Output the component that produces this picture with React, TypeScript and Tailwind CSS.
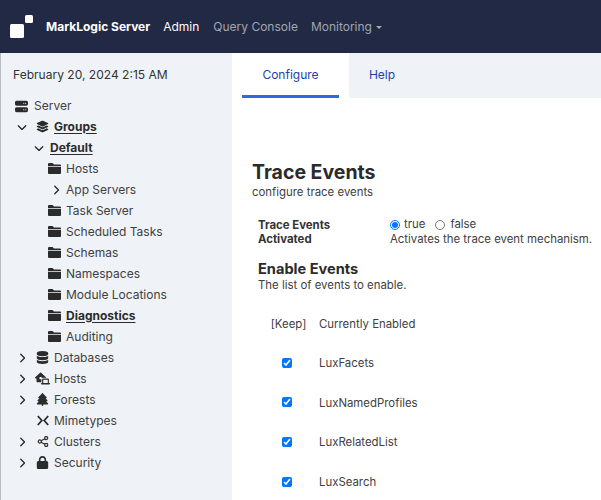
import { ReactNode } from "react";
import {
  FaChevronDown,
  FaChevronRight,
  FaDatabase,
  FaHouseLaptop,
  FaLayerGroup,
  FaLock,
  FaServer,
  FaTree,
} from "react-icons/fa6";

function FolderIcon() {
  return (
    <svg viewBox="0 0 13 11" className="h-[11px] w-[13px]" fill="currentColor">
      <path d="M1 0h3.6l1.4 1.4h6a1 1 0 0 1 1 1V3H0V1a1 1 0 0 1 1-1z" />
      <path d="M0 3.7h13V10a1 1 0 0 1-1 1H1a1 1 0 0 1-1-1z" />
    </svg>
  );
}

function MimeIcon() {
  return (
    <svg viewBox="0 0 12 10" className="h-[11px] w-[12px]" fill="none" stroke="currentColor" strokeWidth="1.8">
      <path d="M.8.5 4.8 5l-4 4.5M11.200.5 7.200 5l4 4.500" />
    </svg>
  );
}

function ShareIcon() {
  return (
    <svg viewBox="0 0 12 12" className="h-[11px] w-[12px]" fill="none" stroke="currentColor" strokeWidth="1.3">
      <circle cx="2.5" cy="6" r="1.7" />
      <circle cx="9.5" cy="2.3" r="1.7" />
      <circle cx="9.5" cy="9.7" r="1.7" />
      <path d="M4 5.2 8 3.1M4 6.8l4 2.1" />
    </svg>
  );
}

function TreeRow({
  indent,
  chevron,
  icon,
  label,
  active,
  narrow,
}: {
  indent: string;
  chevron?: "down" | "right";
  icon?: ReactNode;
  label: string;
  active?: boolean;
  narrow?: boolean;
}) {
  return (
    <li className={`flex h-[21px] items-center ${indent}`}>
      <span className={`flex shrink-0 items-center text-[#212529] ${narrow ? "w-[11px]" : "w-[18px]"}`}>
        {chevron === "down" && <FaChevronDown size={10} />}
        {chevron === "right" && <FaChevronRight size={10} />}
      </span>
      {icon && <span className="flex w-[15px] shrink-0 items-center justify-center text-[#2b2b2b]">{icon}</span>}
      <span
        className={
          active
            ? "ml-[4px] font-bold text-[#2b2b2b] underline underline-offset-2"
            : "ml-[4px] text-[#404040]"
        }
      >
        {label}
      </span>
    </li>
  );
}

const folderIcon = <FolderIcon />;

function Sidebar() {
  return (
    <aside className="w-[231px] shrink-0 bg-[#eff3f8] pl-[12px] pt-[12px]">
      <div className="text-[12.05px] leading-[20px] text-[#333333]">February 20, 2024 2:15 AM</div>
      <ul className="mt-[10px] text-[12px]">
        <li className="flex h-[21px] items-center pl-[2px] pt-[1px]">
          <span className="flex w-[13px] items-center text-[#2b2b2b]">
            <FaServer size={13} />
          </span>
          <span className="ml-[6px] text-[#404040]">Server</span>
        </li>
        <TreeRow indent="pl-[4px]" chevron="down" icon={<FaLayerGroup size={13} />} label="Groups" active />
        <li className="flex h-[21px] items-center pl-[21px]">
          <span className="flex w-[16px] items-center text-[#212529]">
            <FaChevronDown size={10} />
          </span>
          <span className="font-bold text-[#2b2b2b] underline underline-offset-2">Default</span>
        </li>
        <TreeRow indent="pl-[16px]" icon={folderIcon} label="Hosts" />
        <TreeRow indent="pl-[38px]" chevron="right" label="App Servers" narrow />
        <TreeRow indent="pl-[16px]" icon={folderIcon} label="Task Server" />
        <TreeRow indent="pl-[16px]" icon={folderIcon} label="Scheduled Tasks" />
        <TreeRow indent="pl-[16px]" icon={folderIcon} label="Schemas" />
        <TreeRow indent="pl-[16px]" icon={folderIcon} label="Namespaces" />
        <TreeRow indent="pl-[16px]" icon={folderIcon} label="Module Locations" />
        <TreeRow indent="pl-[16px]" icon={folderIcon} label="Diagnostics" active />
        <TreeRow indent="pl-[16px]" icon={folderIcon} label="Auditing" />
        <TreeRow indent="pl-[4px]" chevron="right" icon={<FaDatabase size={13} />} label="Databases" />
        <TreeRow indent="pl-[4px]" chevron="right" icon={<FaHouseLaptop size={15} />} label="Hosts" />
        <TreeRow indent="pl-[4px]" chevron="right" icon={<FaTree size={13} />} label="Forests" />
        <TreeRow indent="pl-[4px]" icon={<MimeIcon />} label="Mimetypes" />
        <TreeRow indent="pl-[4px]" chevron="right" icon={<ShareIcon />} label="Clusters" />
        <TreeRow indent="pl-[4px]" chevron="right" icon={<FaLock size={13} />} label="Security" />
      </ul>
    </aside>
  );
}

function EventRow({ name }: { name: string }) {
  return (
    <div className="flex h-[39.6px] items-center">
      <div className="flex w-[61px] pb-[2px] pl-[24px]">
        <input type="checkbox" defaultChecked className="m-0 h-[10px] w-[10px] accent-[#0075ff]" />
      </div>
      <span>{name}</span>
    </div>
  );
}

export default function App() {
  return (
    <div className="flex h-[500px] w-[601px] flex-col overflow-hidden bg-white font-['Inter',sans-serif] text-[12px] text-[#404040]">
      <nav className="flex h-[53px] shrink-0 items-center bg-[#212944] pl-[10px]">
        <svg viewBox="0 0 24 24" className="h-[24px] w-[24px]" fill="#fff">
          <rect x="0" y="9" width="14" height="14" rx="1.5" />
          <rect x="15" y="0" width="8" height="8" rx="1.5" />
        </svg>
        <span className="ml-[12px] pt-[1px] text-[12px] font-bold text-white">MarkLogic Server</span>
        <span className="ml-[13px] pt-[1px] text-[12px] text-white">Admin</span>
        <span className="ml-[14px] pt-[1px] text-[12px] text-[#a3a5af]">Query Console</span>
        <span className="ml-[13px] flex items-center pt-[1px] text-[12px] text-[#a3a5af]">
          Monitoring
          <span className="ml-[4px] h-0 w-0 border-x-[3px] border-t-[3px] border-x-transparent border-t-[#a3a5af]" />
        </span>
      </nav>
      <div className="flex flex-1 border-l border-[#b9bcc2]">
        <Sidebar />
        <main className="min-w-0 flex-1">
          <div className="flex h-[45px] bg-[#eff3f8]">
            <div className="w-[117px] bg-white pl-[10px]">
              <div className="flex h-[45px] w-[97px] items-center justify-center border-b-[3px] border-[#2b6cdf] pt-[1px] text-[#1f3fa8]">
                Configure
              </div>
            </div>
            <div className="flex h-[45px] w-[66px] items-center justify-center pb-[1px] text-[#1f3fa8]">Help</div>
          </div>
          <div className="pl-[20px] pt-[62px]">
            <h1 className="text-[19.5px] font-bold leading-[25px] text-[#2b2b2b]">Trace Events</h1>
            <p className="text-[11.4px] leading-[14px]">configure trace events</p>
            <div className="mt-[18px] flex pl-[6px]">
              <div className="w-[132px] pt-[1px] text-[11.4px] font-bold leading-[14px] text-[#333333]">
                Trace Events
                <br />
                Activated
              </div>
              <div className="text-[11.4px] leading-[15px]">
                <div className="flex items-center">
                  <input type="radio" name="trace" defaultChecked className="m-0 h-[10px] w-[10px] accent-[#0075ff]" />
                  <span className="ml-[4px]">true</span>
                  <input type="radio" name="trace" className="m-0 ml-[10px] h-[10px] w-[10px] accent-[#0075ff]" />
                  <span className="ml-[5px]">false</span>
                </div>
                <div className="whitespace-nowrap">Activates the trace event mechanism.</div>
              </div>
            </div>
            <div className="pl-[6px] pt-[13px]">
              <h2 className="text-[14.6px] font-bold leading-[18px] text-[#2b2b2b]">Enable Events</h2>
              <p className="text-[11.4px] leading-[14px]">The list of events to enable.</p>
              <div className="mt-[12.4px] text-[11.4px]">
                <div className="flex h-[39.6px] items-center">
                  <span className="w-[61px] text-center">[Keep]</span>
                  <span>Currently Enabled</span>
                </div>
                <EventRow name="LuxFacets" />
                <EventRow name="LuxNamedProfiles" />
                <EventRow name="LuxRelatedList" />
                <EventRow name="LuxSearch" />
              </div>
            </div>
          </div>
        </main>
      </div>
    </div>
  );
}
